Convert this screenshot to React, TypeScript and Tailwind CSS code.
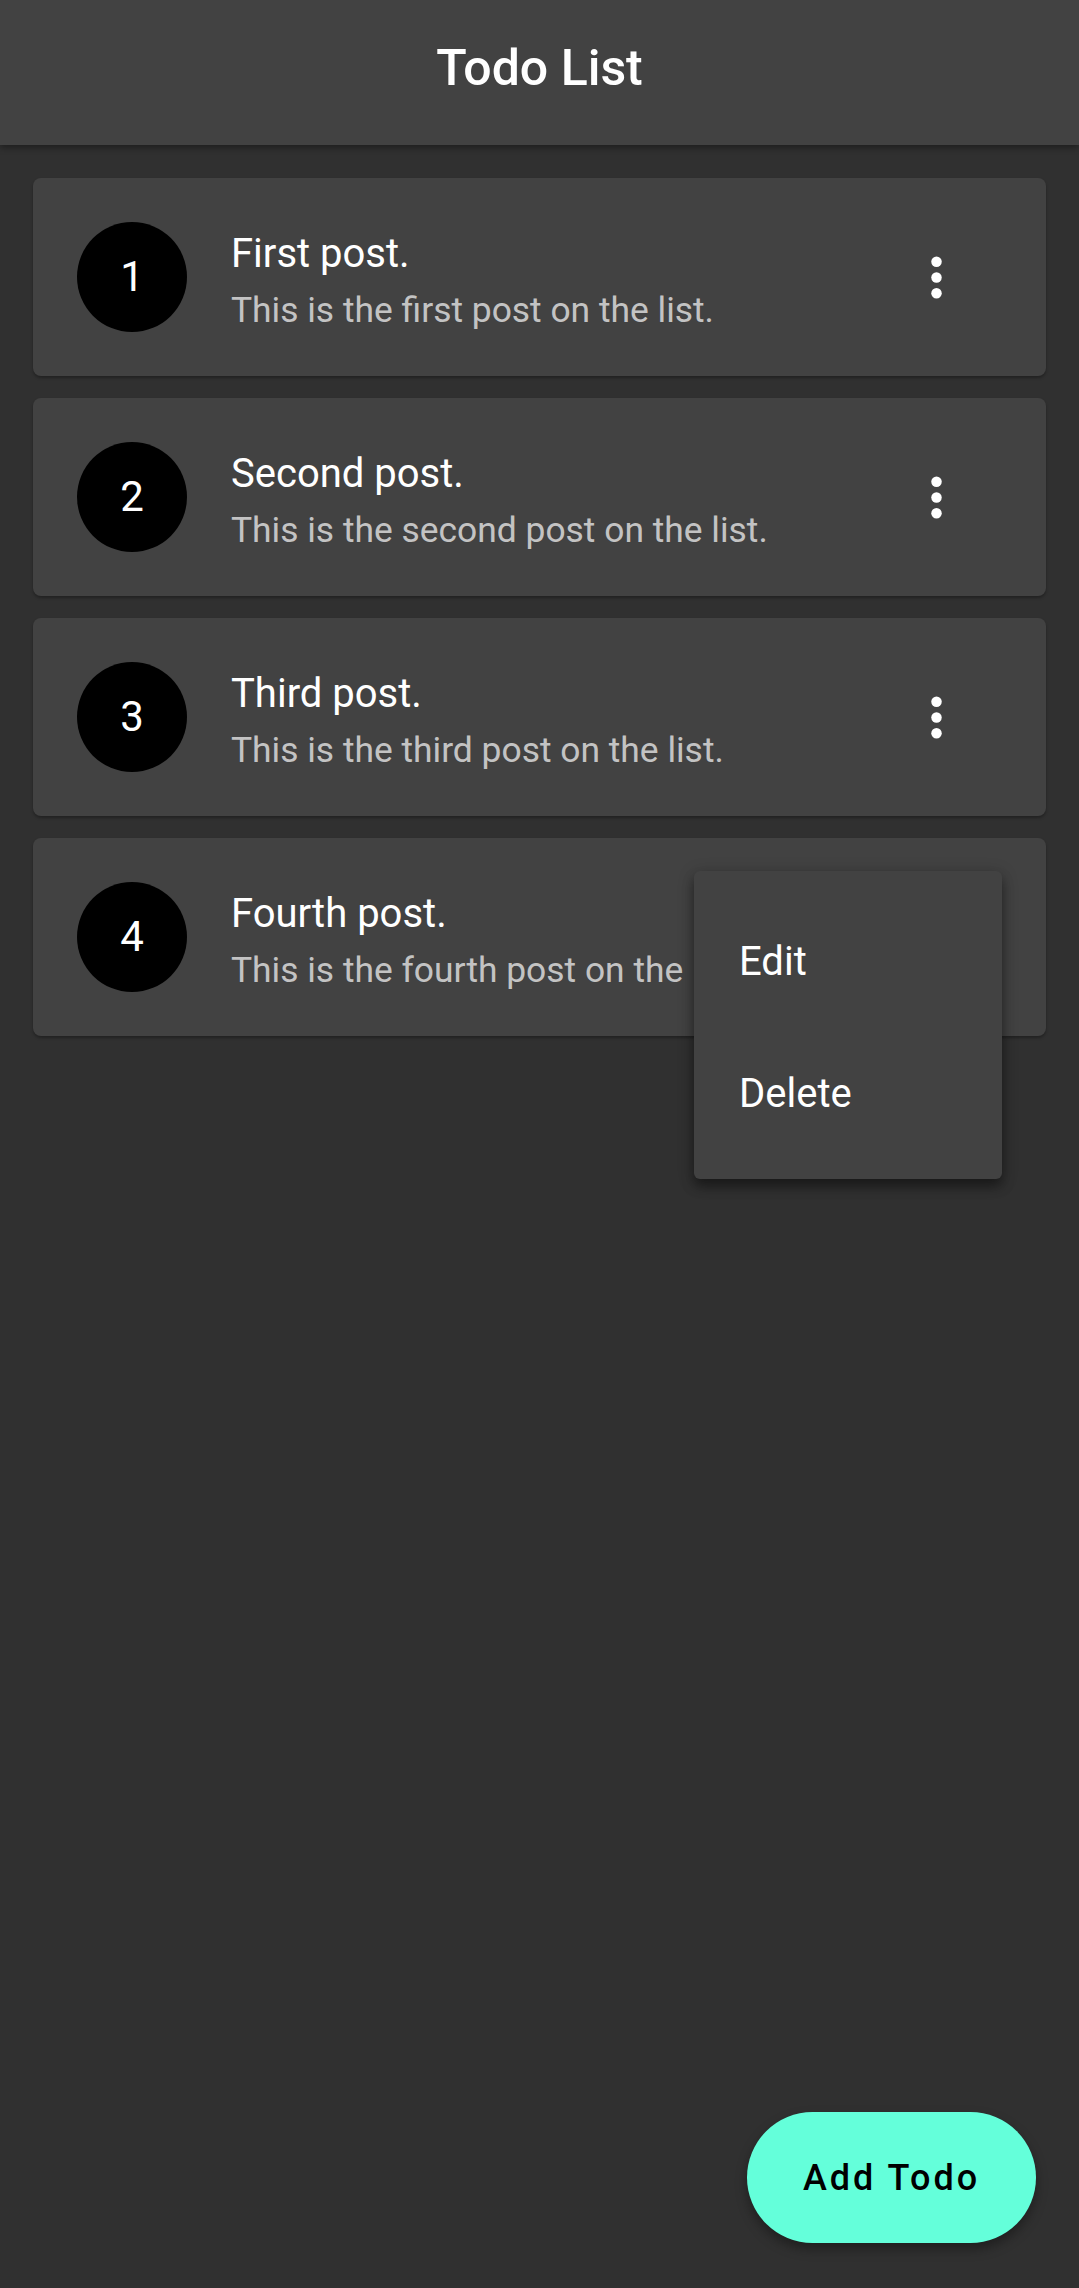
import React from "react";

const posts = [
  { n: 1, title: "First post.", body: "This is the first post on the list." },
  { n: 2, title: "Second post.", body: "This is the second post on the list." },
  { n: 3, title: "Third post.", body: "This is the third post on the list." },
  { n: 4, title: "Fourth post.", body: "This is the fourth post on the list." },
];

function Kebab() {
  return (
    <svg width="63" height="63" viewBox="0 0 24 24" fill="white">
      <circle cx="12" cy="6" r="2" />
      <circle cx="12" cy="12" r="2" />
      <circle cx="12" cy="18" r="2" />
    </svg>
  );
}

export default function App() {
  return (
    <div
      className="relative min-h-[2288px] w-full bg-[#303030] flex flex-col"
      style={{ fontFamily: "Roboto, 'Noto Sans', sans-serif" }}
    >
      <header className="relative z-10 h-[145px] bg-[#424242] flex items-center justify-center pb-[10px] shadow-[0_3px_6px_rgba(0,0,0,0.35)]">
        <h1 className="text-white text-[50px] font-medium leading-none">Todo List</h1>
      </header>

      <main className="flex flex-col gap-[22px] px-[33px] pt-[33px]">
        {posts.map((p) => (
          <div
            key={p.n}
            className="relative h-[198px] rounded-[8px] bg-[#424242] flex items-center shadow-[0_2px_3px_rgba(0,0,0,0.3)]"
          >
            <div className="ml-[44px] w-[110px] h-[110px] shrink-0 rounded-full bg-black flex items-center justify-center">
              <span className="text-white text-[42px] leading-none">{p.n}</span>
            </div>
            <div className="ml-[44px] flex-1 flex flex-col pt-[10px]">
              <div className="text-white text-[40px] leading-[48px]">{p.title}</div>
              <div className="mt-[8px] text-white/70 text-[35.4px] leading-[48px]">{p.body}</div>
            </div>
            <div className="mr-[78px] w-[63px] h-[63px] flex items-center justify-center">
              <Kebab />
            </div>

            {p.n === 4 && (
              <div className="absolute left-[661px] top-[33px] z-20 w-[308px] rounded-[6px] bg-[#424242] pt-[25px] pb-[19px] shadow-[0_8px_12px_rgba(0,0,0,0.35),0_3px_16px_rgba(0,0,0,0.25)]">
                <div className="h-[132px] flex items-center pl-[45px] text-white text-[40px]">Edit</div>
                <div className="h-[132px] flex items-center pl-[45px] text-white text-[40px]">Delete</div>
              </div>
            )}
          </div>
        ))}
      </main>

      <div className="absolute right-[43px] bottom-[45px]">
        <button className="w-[289px] h-[131px] rounded-full bg-[#64ffda] flex items-center justify-center shadow-[0_6px_12px_rgba(0,0,0,0.35)]">
          <span className="text-black text-[36px] font-medium tracking-[3px]">Add Todo</span>
        </button>
      </div>
    </div>
  );
}
